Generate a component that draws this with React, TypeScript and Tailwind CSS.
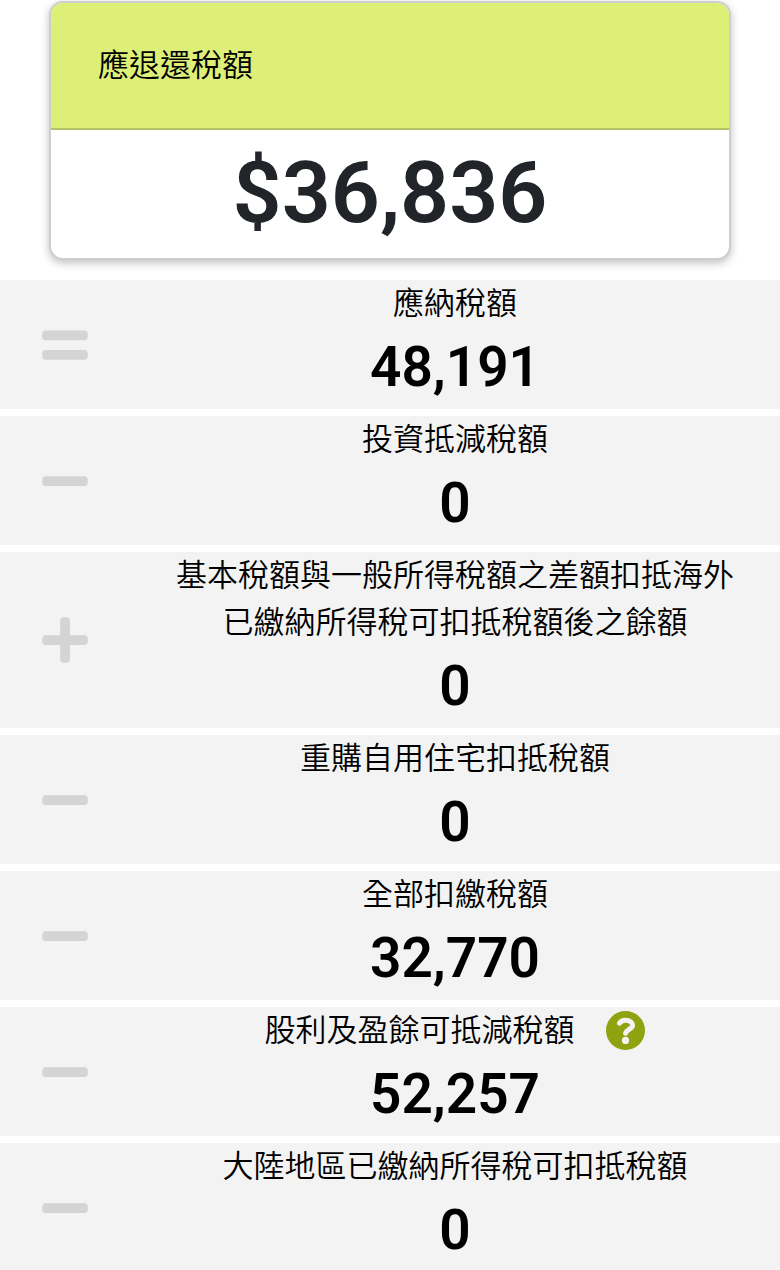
import React from "react";
import { FaEquals, FaMinus, FaPlus } from "react-icons/fa";

type Operator = "equals" | "minus" | "plus";

interface TaxRow {
  operator: Operator;
  label: string;
  value: string;
  hasHelp?: boolean;
}

const rows: TaxRow[] = [
  { operator: "equals", label: "應納稅額", value: "48,191" },
  { operator: "minus", label: "投資抵減稅額", value: "0" },
  {
    operator: "plus",
    label: "基本稅額與一般所得稅額之差額扣抵海外已繳納所得稅可扣抵稅額後之餘額",
    value: "0",
  },
  { operator: "minus", label: "重購自用住宅扣抵稅額", value: "0" },
  { operator: "minus", label: "全部扣繳稅額", value: "32,770" },
  {
    operator: "minus",
    label: "股利及盈餘可抵減稅額",
    value: "52,257",
    hasHelp: true,
  },
  { operator: "minus", label: "大陸地區已繳納所得稅可扣抵稅額", value: "0" },
];

const icons = {
  equals: FaEquals,
  minus: FaMinus,
  plus: FaPlus,
};

// Rounded question mark on a filled disc
const HelpIcon = () => (
  <svg
    viewBox="0 0 39 39"
    className="size-[39px] text-[#8ea30f]"
    aria-hidden="true"
  >
    <circle cx="19.5" cy="19.5" r="19.5" fill="currentColor" />
    <path
      d="M13.5 12.2C14.8 10.2 16.9 9.3 19.5 9.3C23.8 9.3 26.6 11.3 26.6 14.3C26.6 18.1 20.3 18.6 19.6 22.2"
      fill="none"
      stroke="#f3f3f3"
      strokeWidth="5"
      strokeLinecap="round"
      strokeLinejoin="round"
    />
    <circle cx="19.5" cy="29.4" r="3.6" fill="#f3f3f3" />
  </svg>
);

const TaxRowItem: React.FC<{ row: TaxRow }> = ({ row }) => {
  const Icon = icons[row.operator];

  return (
    <li className="flex bg-[#f3f3f3]">
      <div className="flex w-1/6 shrink-0 items-center justify-center">
        <Icon size={52} className="text-[#d4d4d4]" aria-hidden="true" />
      </div>
      <div className="flex-1 px-10 pb-0.5 text-center">
        <div className="flex items-center justify-center gap-8">
          <span className="text-[31px] leading-[47px] font-[350]">
            {row.label}
          </span>
          {row.hasHelp && (
            <button type="button" aria-label={row.label}>
              <HelpIcon />
            </button>
          )}
        </div>
        <div className="text-[55px] leading-[80px] font-semibold">
          {row.value}
        </div>
      </div>
    </li>
  );
};

export default function App() {
  return (
    <main className="bg-white pt-px font-['Roboto','Noto_Sans_CJK_TC',sans-serif] text-black">
      <section className="mx-[49px] overflow-hidden rounded-[14px] border-2 border-[#cecece] bg-white shadow-[0_3px_8px_rgba(0,0,0,0.25)]">
        <h1 className="border-b-2 border-[#b5c267] bg-[#ddef77] px-[47px] py-10 text-[31px] leading-[45px] font-[350]">
          應退還稅額
        </h1>
        <p className="pt-[11px] pb-[13px] text-center text-[86px] leading-[104px] font-semibold text-[#212529]">
          $36,836
        </p>
      </section>

      <ul className="mt-5 flex flex-col gap-[7px]">
        {rows.map((row) => (
          <TaxRowItem key={row.label} row={row} />
        ))}
      </ul>
    </main>
  );
}
